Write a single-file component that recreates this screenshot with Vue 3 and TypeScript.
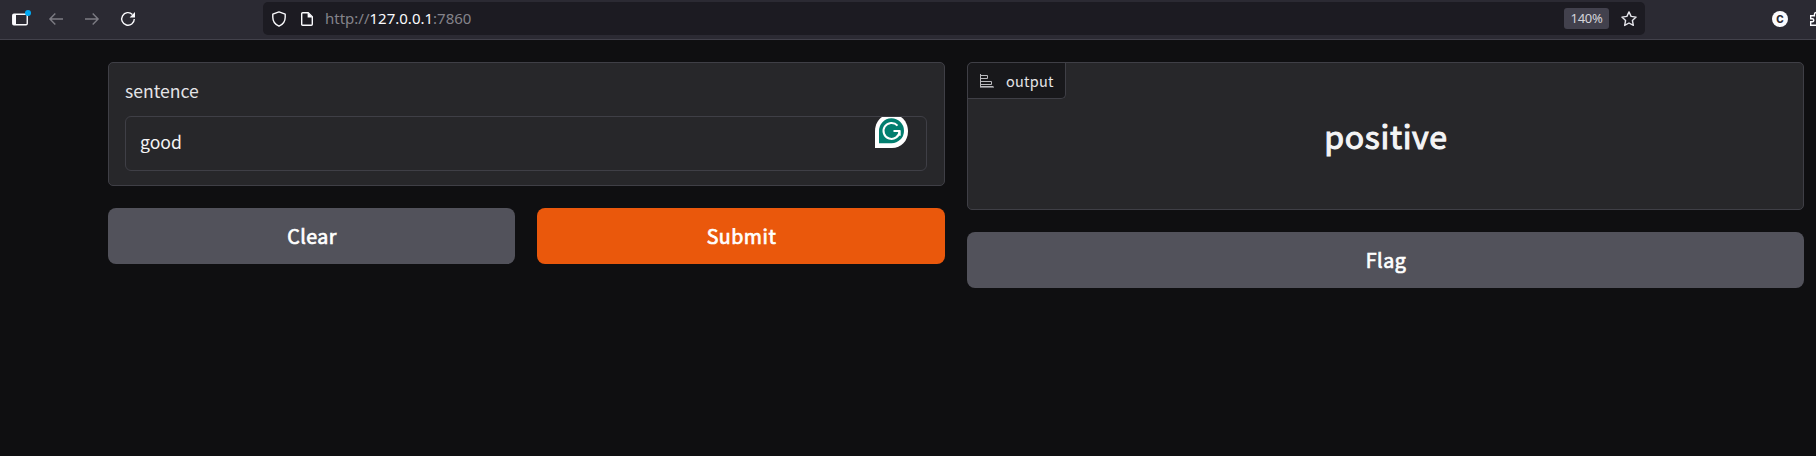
<script setup lang="ts">
import { ref } from 'vue'

const sentence = ref('good')
const output = ref('positive')

function clear(): void {
  sentence.value = ''
  output.value = ''
}
</script>

<template>
  <div class="window">
    <header class="toolbar">
      <nav class="nav">
        <svg class="icon sidebar" width="20" height="18" viewBox="0 0 20 18">
          <rect x="1.75" y="4.25" width="14.5" height="10.5" rx="1.2" fill="none" stroke="#fbfbfe" stroke-width="1.4" />
          <path d="M2 4h3v11H2z" fill="#fbfbfe" />
          <circle cx="17" cy="3" r="3" fill="#00aaf5" />
        </svg>
        <svg class="icon back" width="16" height="16" viewBox="0 0 16 16">
          <path d="M15 8H2M7.3 2.6 1.9 8l5.4 5.4" fill="none" stroke="#7d7c84" stroke-width="1.4" />
        </svg>
        <svg class="icon forward" width="16" height="16" viewBox="0 0 16 16">
          <path d="M1 8h13M8.7 2.6 14.1 8l-5.4 5.4" fill="none" stroke="#7d7c84" stroke-width="1.4" />
        </svg>
        <svg class="icon reload" width="16" height="16" viewBox="0 0 16 16">
          <path d="M12.4 3.4A6.3 6.3 0 1 0 14.3 8" fill="none" stroke="#fbfbfe" stroke-width="1.4" />
          <path d="M15 1v5.4H9.6z" fill="#fbfbfe" />
        </svg>
      </nav>
      <div class="address">
        <svg class="shield" width="16" height="16" viewBox="0 0 16 16">
          <path d="M8 .9 14.2 3.2v3C14.2 9.7 12 13.4 8 15.2 4 13.4 1.8 9.7 1.8 6.2v-3z" fill="none" stroke="#fbfbfe" stroke-width="1.4" stroke-linejoin="round" />
        </svg>
        <svg class="page" width="16" height="16" viewBox="0 0 16 16">
          <path d="M3.7 1.7h5.5l4.1 4.1v7.5q0 1-1 1H3.7q-1 0-1-1V2.7q0-1 1-1z" fill="none" stroke="#fbfbfe" stroke-width="1.4" />
          <path d="M8.6 1.7v4.9h5z" fill="#fbfbfe" />
        </svg>
        <span class="url">http://<b>127.0.0.1</b>:7860</span>
        <span class="zoom">140%</span>
        <svg class="star" width="18" height="18" viewBox="0 0 18 18">
          <path d="m9 1.9 2.1 4.5 5 .7-3.7 3.4.95 4.9L9 13l-4.35 2.4.95-4.9-3.7-3.4 5-.7z" fill="none" stroke="#e6e6ec" stroke-width="1.4" stroke-linejoin="round" />
        </svg>
      </div>
      <span class="account">C</span>
      <svg class="extensions" width="16" height="16" viewBox="0 0 16 16">
        <path d="M.7 4.7h3.7V3.4a2 2 0 0 1 4 0v1.3h3.7v9.6H.7v-3.5h1.6a1.5 1.5 0 0 0 0-3H.7z" fill="none" stroke="#fbfbfe" stroke-width="1.4" />
      </svg>
    </header>

    <main class="content">
      <section class="column">
        <div class="panel input-panel">
          <label class="caption" for="sentence">sentence</label>
          <div class="field">
            <input id="sentence" v-model="sentence" type="text" />
            <svg class="grammar" width="33" height="32" viewBox="0 0 33 32">
              <path d="M0 31V14C0 8 3 2.500 7 0h19C30.500 3 33 8.500 33 14.500 33 24 26 31 17 31z" fill="#fff" />
              <path d="M4 26.300V14.200a12.500 12.500 0 1 1 12.500 12.100z" fill="#027e6f" />
              <path d="M22.500 8.600A8 8 0 1 0 24.500 14.100h-6M24.700 14.100v4.700" fill="none" stroke="#fff" stroke-width="2" />
            </svg>
          </div>
        </div>
        <div class="actions">
          <button class="button" type="button" @click="clear">Clear</button>
          <button class="button primary" type="button">Submit</button>
        </div>
      </section>

      <section class="column">
        <div class="panel output-panel">
          <div class="tag">
            <svg width="16" height="16" viewBox="0 0 16 16" fill="none" stroke="#b9b9bd" stroke-width="1">
              <path d="M1.500 1v14M2 2.500h6.500v3H2M2 8.500h10.500v3H2M2 13.500h12.500" />
              <path d="M1 14.500h14" stroke="#77777c" />
            </svg>
            <span>output</span>
          </div>
          <h2 class="result">{{ output }}</h2>
        </div>
        <button class="button" type="button">Flag</button>
      </section>
    </main>
  </div>
</template>

<style>
body {
  background: #0f0f11;
}
</style>

<style scoped>
.window {
  box-sizing: border-box;
  height: 456px;
  overflow: hidden;
  background: #0f0f11;
  color: #f4f4f5;
  font-family: "Noto Sans CJK SC", "Noto Sans", sans-serif;
}
.window * {
  box-sizing: border-box;
}
svg {
  display: block;
  flex: none;
}
.toolbar {
  display: flex;
  align-items: center;
  height: 40px;
  padding-bottom: 2px;
  overflow: hidden;
  background: #2b2a33;
  border-bottom: 1px solid #42414b;
  font-family: "Noto Sans", sans-serif;
}
.nav {
  display: flex;
  align-items: center;
  width: 263px;
  flex: none;
  padding-left: 11px;
}
.back {
  margin-left: 17px;
}
.forward {
  margin-left: 20px;
}
.reload {
  margin-left: 20px;
}
.address {
  display: flex;
  align-items: center;
  width: 1382px;
  height: 33px;
  flex: none;
  padding: 0 7px 0 8px;
  border-radius: 5px;
  background: #1c1b22;
}
.page {
  margin-left: 12px;
}
.url {
  margin-left: 10px;
  padding-bottom: 1px;
  color: #84838a;
  font-size: 15px;
}
.url b {
  color: #fbfbfe;
  font-weight: 400;
}
.zoom {
  width: 45px;
  height: 21px;
  margin-left: auto;
  border-radius: 3px;
  background: #42414d;
  color: #d4d4da;
  font-size: 13px;
  letter-spacing: -0.3px;
  line-height: 20px;
  text-align: center;
}
.star {
  margin-left: 11px;
}
.account {
  width: 16px;
  height: 16px;
  flex: none;
  margin-left: 127px;
  border-radius: 50%;
  background: #fbfbfe;
  color: #2b2a33;
  font: 800 10px/16px "Inter", sans-serif;
  text-align: center;
}
.extensions {
  margin-left: 22px;
}
.content {
  display: grid;
  grid-template-columns: 837px 837px;
  gap: 22px;
  align-items: start;
  padding: 22px 0 0 108px;
}
.column {
  display: flex;
  flex-direction: column;
  gap: 22px;
}
.panel {
  border: 1px solid #3f3f46;
  border-radius: 5px;
  background: #27272a;
}
.input-panel {
  height: 124px;
  padding: 15px 17px 0 16px;
}
.caption {
  display: block;
  height: 26px;
  margin-bottom: 12px;
  color: #e4e4e7;
  font-size: 17.6px;
  line-height: 26px;
}
.field {
  position: relative;
  height: 55px;
}
.field input {
  display: block;
  width: 100%;
  height: 55px;
  padding: 0 14px 4px;
  border: 1px solid #3f3f46;
  border-radius: 6px;
  outline: none;
  background: #27272a;
  color: #f4f4f5;
  font: 17.6px "Noto Sans CJK SC", sans-serif;
}
.grammar {
  position: absolute;
  top: 1px;
  right: 19px;
}
.actions {
  display: grid;
  grid-template-columns: 407px 408px;
  gap: 22px;
}
.button {
  height: 56px;
  padding: 0 0 0 1px;
  border: 0;
  border-radius: 8px;
  background: #52525b;
  color: #fff;
  font: 400 19.6px/56px "Noto Sans CJK SC", sans-serif;
  letter-spacing: 0.5px;
  -webkit-text-stroke: 0.7px #fff;
  text-align: center;
}
.primary {
  background: #ea580c;
}
.output-panel {
  height: 148px;
}
.tag {
  display: flex;
  align-items: center;
  width: 98px;
  height: 36px;
  padding-left: 11px;
  border: solid #3f3f46;
  border-width: 0 1px 1px 0;
  border-radius: 5px 0 5px 0;
  background: #18181b;
  color: #e4e4e7;
  font-size: 14.5px;
  letter-spacing: 0.25px;
}
.tag span {
  margin-left: 11px;
}
.result {
  margin: 6px 0 0;
  padding-left: 1px;
  color: #f4f4f5;
  font-size: 32px;
  font-weight: 400;
  letter-spacing: 0.65px;
  line-height: 60px;
  text-align: center;
  -webkit-text-stroke: 1.1px #f4f4f5;
}
</style>
